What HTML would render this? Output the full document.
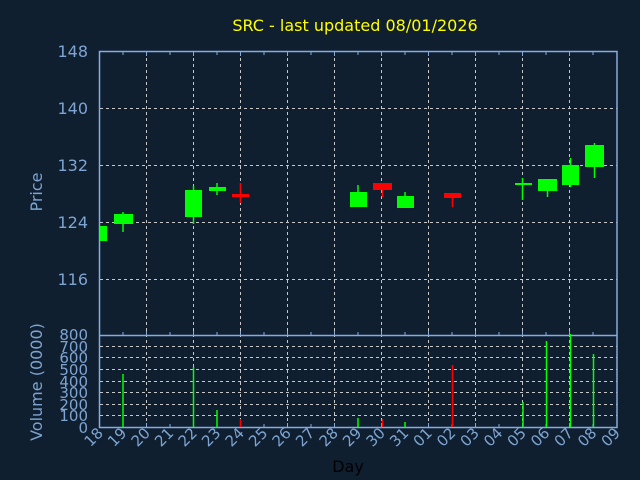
<!DOCTYPE html>
<html><head><style>html,body{margin:0;padding:0;background:#0f1f30;}svg{display:block}</style></head>
<body>
<svg width="640" height="480" viewBox="0 0 640 480" xmlns="http://www.w3.org/2000/svg" font-family="DejaVu Sans, Liberation Sans, sans-serif">
<rect width="640" height="480" fill="#0f1f30"/>
<text x="355" y="31" fill="#ffff00" font-size="16" text-anchor="middle">SRC - last updated 08/01/2026</text>
<g stroke="#c8c8c8" stroke-width="1" stroke-dasharray="3,3" fill="none">
<path d="M146.5 52V427M193.5 52V427M240.5 52V427M287.5 52V427M334.5 52V427M381.5 52V427M428.5 52V427M475.5 52V427M522.5 52V427M569.5 52V427"/>
<path d="M100 108.5H617M100 165.5H617M100 222.5H617M100 279.5H617"/>
<path d="M100 346.5H617M100 357.5H617M100 369.5H617M100 381.5H617M100 392.5H617M100 404.5H617M100 415.5H617"/>
</g>
<g stroke="#88aadd" stroke-width="1.5" fill="none">
<path d="M99.5 51.5H617V427.5H99.5Z"/>
<path d="M99.5 335.5H617"/>
</g>
<g stroke="#88aadd" stroke-width="1" fill="none">
<path d="M123 52v3M146.5 52v4M170 52v3M193.5 52v4M217 52v3M240.5 52v4M264 52v3M287.5 52v4M311 52v3M334.5 52v4M358 52v3M381.5 52v4M405 52v3M428.5 52v4M452 52v3M475.5 52v4M499 52v3M522.5 52v4M546 52v3M569.5 52v4M593 52v3"/>
<path d="M123 335v-3M146.5 335v-4M170 335v-3M193.5 335v-4M217 335v-3M240.5 335v-4M264 335v-3M287.5 335v-4M311 335v-3M334.5 335v-4M358 335v-3M381.5 335v-4M405 335v-3M428.5 335v-4M452 335v-3M475.5 335v-4M499 335v-3M522.5 335v-4M546 335v-3M569.5 335v-4M593 335v-3"/>
<path d="M123 427v-3M146.5 427v-4M170 427v-3M193.5 427v-4M217 427v-3M240.5 427v-4M264 427v-3M287.5 427v-4M311 427v-3M334.5 427v-4M358 427v-3M381.5 427v-4M405 427v-3M428.5 427v-4M452 427v-3M475.5 427v-4M499 427v-3M522.5 427v-4M546 427v-3M569.5 427v-4M593 427v-3"/>
</g>
<g fill="#7ea4d2" font-size="16" text-anchor="end">
<text x="88" y="57">148</text><text x="88" y="114">140</text><text x="88" y="171">132</text><text x="88" y="228">124</text><text x="88" y="285">116</text>
</g>
<g fill="#7ea4d2" font-size="15" text-anchor="end">
<text x="88" y="340">800</text><text x="88" y="352">700</text><text x="88" y="363">600</text><text x="88" y="375">500</text><text x="88" y="387">400</text><text x="88" y="398">300</text><text x="88" y="410">200</text><text x="88" y="421">100</text><text x="88" y="433">0</text>
</g>
<text transform="translate(42 192) rotate(-90)" fill="#7ea4d2" font-size="16" text-anchor="middle">Price</text>
<text transform="translate(42 382) rotate(-90)" fill="#7ea4d2" font-size="16" text-anchor="middle">Volume (0000)</text>
<g fill="#7ea4d2" font-size="15" text-anchor="end">
<text transform="translate(104 434) rotate(-45)">18</text>
<text transform="translate(127.5 434) rotate(-45)">19</text>
<text transform="translate(151 434) rotate(-45)">20</text>
<text transform="translate(174.5 434) rotate(-45)">21</text>
<text transform="translate(198 434) rotate(-45)">22</text>
<text transform="translate(221.5 434) rotate(-45)">23</text>
<text transform="translate(245 434) rotate(-45)">24</text>
<text transform="translate(268.5 434) rotate(-45)">25</text>
<text transform="translate(292 434) rotate(-45)">26</text>
<text transform="translate(315.5 434) rotate(-45)">27</text>
<text transform="translate(339 434) rotate(-45)">28</text>
<text transform="translate(362.5 434) rotate(-45)">29</text>
<text transform="translate(386 434) rotate(-45)">30</text>
<text transform="translate(409.5 434) rotate(-45)">31</text>
<text transform="translate(433 434) rotate(-45)">01</text>
<text transform="translate(456.5 434) rotate(-45)">02</text>
<text transform="translate(480 434) rotate(-45)">03</text>
<text transform="translate(503.5 434) rotate(-45)">04</text>
<text transform="translate(527 434) rotate(-45)">05</text>
<text transform="translate(550.5 434) rotate(-45)">06</text>
<text transform="translate(574 434) rotate(-45)">07</text>
<text transform="translate(597.5 434) rotate(-45)">08</text>
<text transform="translate(621 434) rotate(-45)">09</text>
</g>
<text x="348" y="472" fill="#000" font-size="16" text-anchor="middle">Day</text>
<!-- candles -->
<g fill="#00ff00" stroke="#00ff00" stroke-width="1.5">
<rect x="100" y="226" width="7" height="15" stroke="none"/>
<path d="M123 212v20"/><rect x="114" y="214" width="19" height="10" stroke="none"/>
<path d="M193.5 186v38"/><rect x="185" y="190" width="17" height="27" stroke="none"/>
<path d="M217 183v12"/><rect x="209" y="187" width="17" height="4" stroke="none"/>
<path d="M358 185v10"/><rect x="350" y="192" width="17" height="15" stroke="none"/>
<path d="M405 192v6"/><rect x="397" y="196" width="17" height="12" stroke="none"/>
<path d="M522.5 178v22"/><rect x="515" y="183" width="17" height="2" stroke="none"/>
<path d="M547.5 185v12"/><rect x="538" y="179" width="19" height="12" stroke="none"/>
<path d="M570.5 158v29"/><rect x="562" y="165" width="17" height="20" stroke="none"/>
<path d="M594.5 143v35"/><rect x="585" y="145" width="19" height="22" stroke="none"/>
</g>
<g fill="#ff0000" stroke="#ff0000" stroke-width="1.5">
<path d="M240.5 183v20"/><rect x="232" y="194" width="17" height="3" stroke="none"/>
<path d="M382.5 185v12"/><rect x="373" y="183" width="19" height="7" stroke="none"/>
<path d="M452.5 193v14"/><rect x="444" y="193" width="17" height="5" stroke="none"/>
</g>
<!-- volume -->
<g stroke="#00ff00" stroke-width="1.5">
<path d="M123 374V427M193.5 367V427M217 410V427M358 418V427M405 422V427M523 402V427M546.5 341V427M570.5 334V427M593.5 354V427"/>
</g>
<g stroke="#ff0000" stroke-width="1.5">
<path d="M240.5 419V427M382.5 419V427M452.5 365V427"/>
</g>
</svg>
</body></html>
